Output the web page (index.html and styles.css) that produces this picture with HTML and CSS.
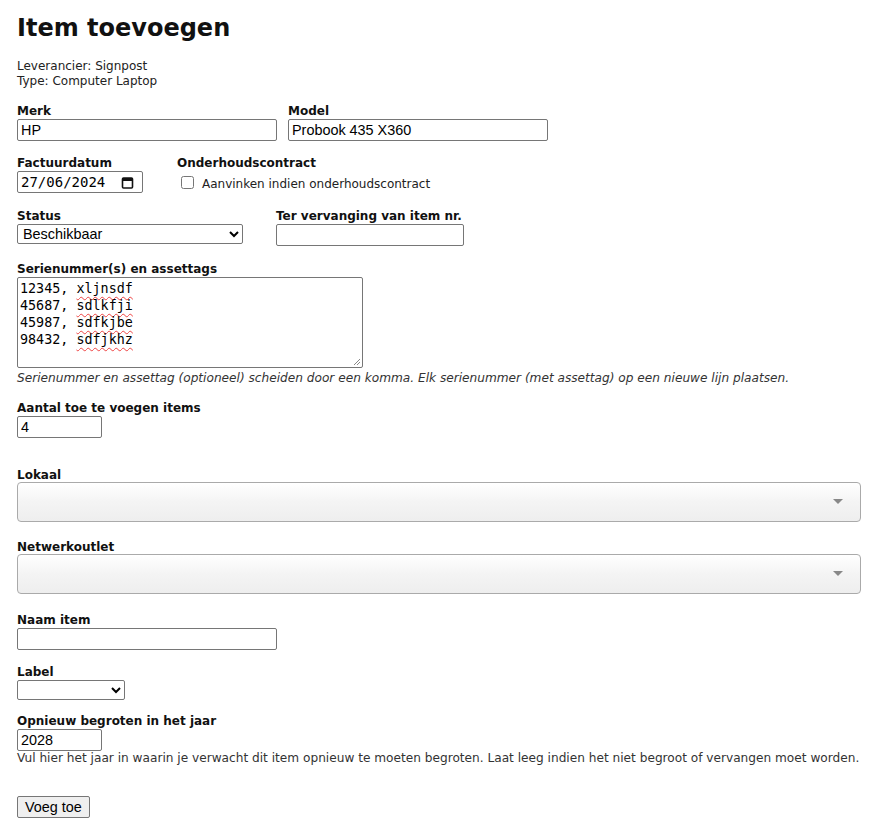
FILE: index.html
```html
<!DOCTYPE html>
<html lang="nl">
<head>
<meta charset="utf-8">
<title>Item toevoegen</title>
<link rel="stylesheet" href="styles.css">
</head>
<body>
<div class="page">
  <h1 class="title">Item toevoegen</h1>
  <div class="meta">
    <div>Leverancier: Signpost</div>
    <div>Type: Computer Laptop</div>
  </div>

  <div class="row row-merk">
    <div class="field">
      <label class="lbl">Merk</label>
      <input class="txt w260" type="text" value="HP">
    </div>
    <div class="field">
      <label class="lbl">Model</label>
      <input class="txt w260" type="text" value="Probook 435 X360">
    </div>
  </div>

  <div class="row row-date">
    <div class="field">
      <label class="lbl">Factuurdatum</label>
      <div class="date">
        <span class="date-val">27/06/2024</span>
        <svg class="cal" width="13" height="13" viewBox="0 0 13 13"><rect x="1.5" y="2" width="10" height="10" rx="1" fill="none" stroke="#111" stroke-width="1.6"/><rect x="1" y="2" width="11" height="3" fill="#111"/></svg>
      </div>
    </div>
    <div class="field">
      <label class="lbl">Onderhoudscontract</label>
      <div class="check">
        <input class="cb" type="checkbox">
        <span>Aanvinken indien onderhoudscontract</span>
      </div>
    </div>
  </div>

  <div class="row row-status">
    <div class="field">
      <label class="lbl">Status</label>
      <select class="sel w226"><option>Beschikbaar</option></select>
    </div>
    <div class="field">
      <label class="lbl">Ter vervanging van item nr.</label>
      <input class="txt w188" type="text">
    </div>
  </div>

  <div class="block block-serie">
    <label class="lbl">Serienummer(s) en assettags</label>
    <div class="area">
      <div>12345, <span class="sp">xljnsdf</span></div>
      <div>45687, <span class="sp">sdlkfji</span></div>
      <div>45987, <span class="sp">sdfkjbe</span></div>
      <div>98432, <span class="sp">sdfjkhz</span></div>
      <svg class="grip" width="8" height="8" viewBox="0 0 8 8"><path d="M7 1 L1 7 M7 4 L4 7" stroke="#888" stroke-width="1"/></svg>
    </div>
    <div class="help help-i">Serienummer en assettag (optioneel) scheiden door een komma. Elk serienummer (met assettag) op een nieuwe lijn plaatsen.</div>
  </div>

  <div class="block block-aantal">
    <label class="lbl">Aantal toe te voegen items</label>
    <input class="txt w85" type="text" value="4">
  </div>

  <div class="block block-s2">
    <label class="lbl">Lokaal</label>
    <div class="s2"><span class="s2-arrow"></span></div>
  </div>

  <div class="block block-s2">
    <label class="lbl">Netwerkoutlet</label>
    <div class="s2"><span class="s2-arrow"></span></div>
  </div>

  <div class="block">
    <label class="lbl">Naam item</label>
    <input class="txt w260" type="text">
  </div>

  <div class="block block-label">
    <label class="lbl">Label</label>
    <select class="sel w108"><option></option></select>
  </div>

  <div class="block block-jaar">
    <label class="lbl">Opnieuw begroten in het jaar</label>
    <input class="txt w85" type="text" value="2028">
    <div class="help">Vul hier het jaar in waarin je verwacht dit item opnieuw te moeten begroten. Laat leeg indien het niet begroot of vervangen moet worden.</div>
  </div>

  <button class="btn" type="button">Voeg toe</button>
</div>
</body>
</html>
```

FILE: styles.css
```css
* { box-sizing: border-box; }
html, body { margin: 0; padding: 0; background: #fff; }
body {
  font-family: "DejaVu Sans", Verdana, sans-serif;
  font-size: 12px;
  line-height: 15px;
  color: #222;
}
.page {
  padding: 12px 0 0 17px;
  width: 861px;
}
.title {
  margin: 0;
  font-size: 24px;
  line-height: 32px;
  font-weight: bold;
  color: #111;
}
.meta {
  margin-top: 15px;
  font-size: 12px;
  line-height: 15px;
  color: #222;
}
.row {
  display: flex;
  align-items: flex-start;
  margin-top: 15px;
}
.row-merk { gap: 11px; }
.row-date { gap: 34px; }
.row-status { gap: 33px; margin-top: 16px; }
.field { display: flex; flex-direction: column; align-items: flex-start; }
.lbl {
  display: block;
  font-weight: bold;
  color: #111;
  font-size: 12px;
  line-height: 15px;
  height: 15px;
}
.txt {
  font-family: "Liberation Sans", Arial, sans-serif;
  font-size: 14.4px;
  color: #000;
  height: 22px;
  border: 1px solid #767676;
  border-radius: 2px;
  padding: 1px 3px;
  margin: 0;
  background: #fff;
  display: block;
}
.w260 { width: 260px; }
.w188 { width: 188px; }
.w85 { width: 85px; }
.date {
  width: 126px;
  height: 22px;
  border: 1px solid #767676;
  border-radius: 2px;
  display: flex;
  align-items: center;
  padding: 0 8px 0 3px;
  justify-content: space-between;
}
.date-val {
  font-family: "DejaVu Sans Mono", "Liberation Mono", monospace;
  font-size: 14px;
  color: #000;
}
.check {
  display: flex;
  align-items: center;
  margin-top: 6px;
  padding-left: 4px;
  gap: 8px;
  color: #222;
}
.cb {
  width: 13px;
  height: 13px;
  margin: 0;
  position: relative;
  top: -2px;
}
.sel {
  font-family: "Liberation Sans", Arial, sans-serif;
  font-size: 14.4px;
  color: #000;
  height: 20px;
  border: 1px solid #767676;
  border-radius: 2px;
  margin: 0;
  padding: 0 0 0 1px;
  background: #fff;
  display: block;
}
.w226 { width: 226px; }
.w108 { width: 108px; }
.block { margin-top: 15px; }
.block-serie { margin-top: 16px; }
.area {
  position: relative;
  width: 346px;
  height: 91px;
  border: 1px solid #767676;
  border-radius: 2px;
  padding: 2px 2px;
  font-family: "DejaVu Sans Mono", "Liberation Mono", monospace;
  font-size: 13.4px;
  line-height: 17px;
  color: #000;
}
.sp {
  text-decoration: underline wavy #e44;
  text-decoration-thickness: 1px;
  text-underline-offset: 3px;
}
.grip { position: absolute; right: 1px; bottom: 1px; }
.help {
  color: #333;
  font-size: 12.15px;
  line-height: 15px;
}
.help-i { font-style: italic; margin-top: 3px; }
.block-aantal { margin-top: 15px; }
.block-s2 { margin-top: 30px; }
.block-s2 + .block { margin-top: 19px; }
.block-s2 + .block-s2 { margin-top: 18px; }
.s2 {
  position: relative;
  width: 844px;
  height: 40px;
  margin-top: -1px;
  border: 1px solid #aaa;
  border-radius: 4px;
  background: linear-gradient(to bottom, #fff 0%, #f4f4f4 50%, #eee 100%);
}
.s2-arrow {
  position: absolute;
  right: 17px;
  top: 16px;
  width: 0;
  height: 0;
  border-left: 5px solid transparent;
  border-right: 5px solid transparent;
  border-top: 5px solid #888;
}
.block-label { margin-top: 15px; }
.block-jaar { margin-top: 14px; }
.btn {
  margin-top: 30px;
  font-family: "Liberation Sans", Arial, sans-serif;
  font-size: 14.4px;
  color: #000;
  height: 22px;
  padding: 1px 7px;
  border: 1px solid #767676;
  border-radius: 2px;
  background: #efefef;
}
```
